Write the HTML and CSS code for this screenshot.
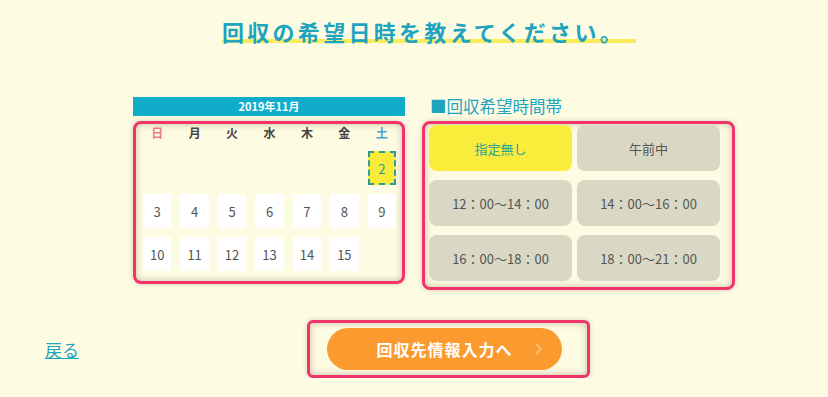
FILE: index.html
```html
<!DOCTYPE html>
<html lang="ja">
<head>
  <meta charset="UTF-8" />
  <meta name="viewport" content="width=device-width, initial-scale=1.0"/>
  <title>回収の希望日時</title>
  <link rel="stylesheet" href="styles.css">
</head>
<body>
  <h1 class="title"><span>回収の希望日時を教えてください。</span></h1>

  <div class="pickers">
    <div class="calendar">
      <div class="month">2019年11月</div>
      <div class="cal-box">
        <div class="dow sun">日</div>
        <div class="dow">月</div>
        <div class="dow">火</div>
        <div class="dow">水</div>
        <div class="dow">木</div>
        <div class="dow">金</div>
        <div class="dow sat">土</div>

        <div class="day empty"></div>
        <div class="day empty"></div>
        <div class="day empty"></div>
        <div class="day empty"></div>
        <div class="day empty"></div>
        <div class="day empty"></div>
        <div class="day selected">2</div>

        <div class="day">3</div>
        <div class="day">4</div>
        <div class="day">5</div>
        <div class="day">6</div>
        <div class="day">7</div>
        <div class="day">8</div>
        <div class="day">9</div>

        <div class="day">10</div>
        <div class="day">11</div>
        <div class="day">12</div>
        <div class="day">13</div>
        <div class="day">14</div>
        <div class="day">15</div>
        <div class="day empty"></div>
      </div>
    </div>

    <div class="times">
      <div class="times-label">■回収希望時間帯</div>
      <div class="time-box">
        <button class="slot active">指定無し</button>
        <button class="slot">午前中</button>
        <button class="slot">12：00〜14：00</button>
        <button class="slot">14：00〜16：00</button>
        <button class="slot">16：00〜18：00</button>
        <button class="slot">18：00〜21：00</button>
      </div>
    </div>
  </div>

  <div class="actions">
    <a class="back" href="#">戻る</a>
    <div class="next-box">
      <button class="next">回収先情報入力へ
        <svg class="arrow" width="7" height="12" viewBox="0 0 7 12"><path d="M1 1 L6 6 L1 11" fill="none" stroke="#fdd08c" stroke-width="1.2"/></svg>
      </button>
    </div>
  </div>
</body>
</html>
```

FILE: styles.css
```css
body {
  margin: 0;
  background-color: #fefbe3;
  font-family: "Noto Sans CJK JP", "Noto Sans", sans-serif;
  color: #555;
}
.title {
  margin: 0;
  padding: 16px 0 0 30px;
  text-align: center;
  font-size: 22px;
  line-height: 31px;
  font-weight: bold;
  letter-spacing: 3.3px;
  color: #1fa4bf;
}
.title span {
  padding-right: 11px;
  background: linear-gradient(transparent 74%, #f8ec5c 74%, #f8ec5c 88%, transparent 88%);
}
.pickers {
  display: flex;
  gap: 17px;
  margin: 50px 0 0 133px;
}
.calendar {
  width: 272px;
}
.month {
  height: 19px;
  line-height: 19px;
  margin-bottom: 5px;
  background-color: #12accb;
  color: #fff;
  font-size: 11px;
  font-weight: bold;
  text-align: center;
}
.cal-box,
.time-box,
.next-box {
  border: 3px solid #f1336b;
  border-radius: 8px;
  box-shadow: inset 0 0 7px rgba(90, 80, 40, 0.35), 0 0 5px rgba(90, 80, 40, 0.25);
}
.cal-box {
  display: grid;
  grid-template-columns: repeat(7, 1fr);
  grid-template-rows: 18px 34px 34px 34px;
  gap: 9px;
  padding: 0 6px 10px 7px;
}
.dow {
  font-size: 12px;
  font-weight: bold;
  color: #444;
  text-align: center;
  line-height: 18px;
}
.dow.sun { color: #f07c7c; }
.dow.sat { color: #4b9fcf; }
.day {
  display: flex;
  align-items: center;
  justify-content: center;
  background-color: #fff;
  font-size: 13px;
  color: #555;
}
.day.empty { background: none; }
.day.selected {
  background-color: #f9eb3a;
  border: 2px dashed #2c9c96;
  color: #2c9c96;
}
.times {
  width: 313px;
}
.times-label {
  height: 19px;
  line-height: 19px;
  margin-bottom: 5px;
  padding-left: 8px;
  font-size: 16.5px;
  color: #1fa4bf;
}
.time-box {
  display: grid;
  grid-template-columns: 143px 143px;
  grid-template-rows: 46px 46px 46px;
  column-gap: 5px;
  row-gap: 9px;
  padding: 1px 12px 6px 4px;
}
.slot {
  border: none;
  border-radius: 8px;
  background-color: #d8d8c5;
  font-family: inherit;
  font-size: 13px;
  color: #555;
  cursor: pointer;
}
.slot.active {
  background-color: #f9ec3b;
  color: #2ba39a;
}
.actions {
  display: flex;
  align-items: center;
  margin-top: 30px;
  padding-left: 45px;
}
.back {
  font-size: 17px;
  color: #1fa4bf;
}
.next-box {
  margin-left: 228px;
  padding: 5px 25px 5px 17px;
  border-radius: 6px;
}
.next {
  position: relative;
  width: 235px;
  height: 42px;
  padding: 0;
  border: none;
  border-radius: 21px;
  background-color: #fb9a2f;
  color: #fff;
  font-family: inherit;
  font-size: 16px;
  font-weight: bold;
  letter-spacing: 1px;
  cursor: pointer;
}
.arrow {
  position: absolute;
  right: 20px;
  top: 15px;
}
```
